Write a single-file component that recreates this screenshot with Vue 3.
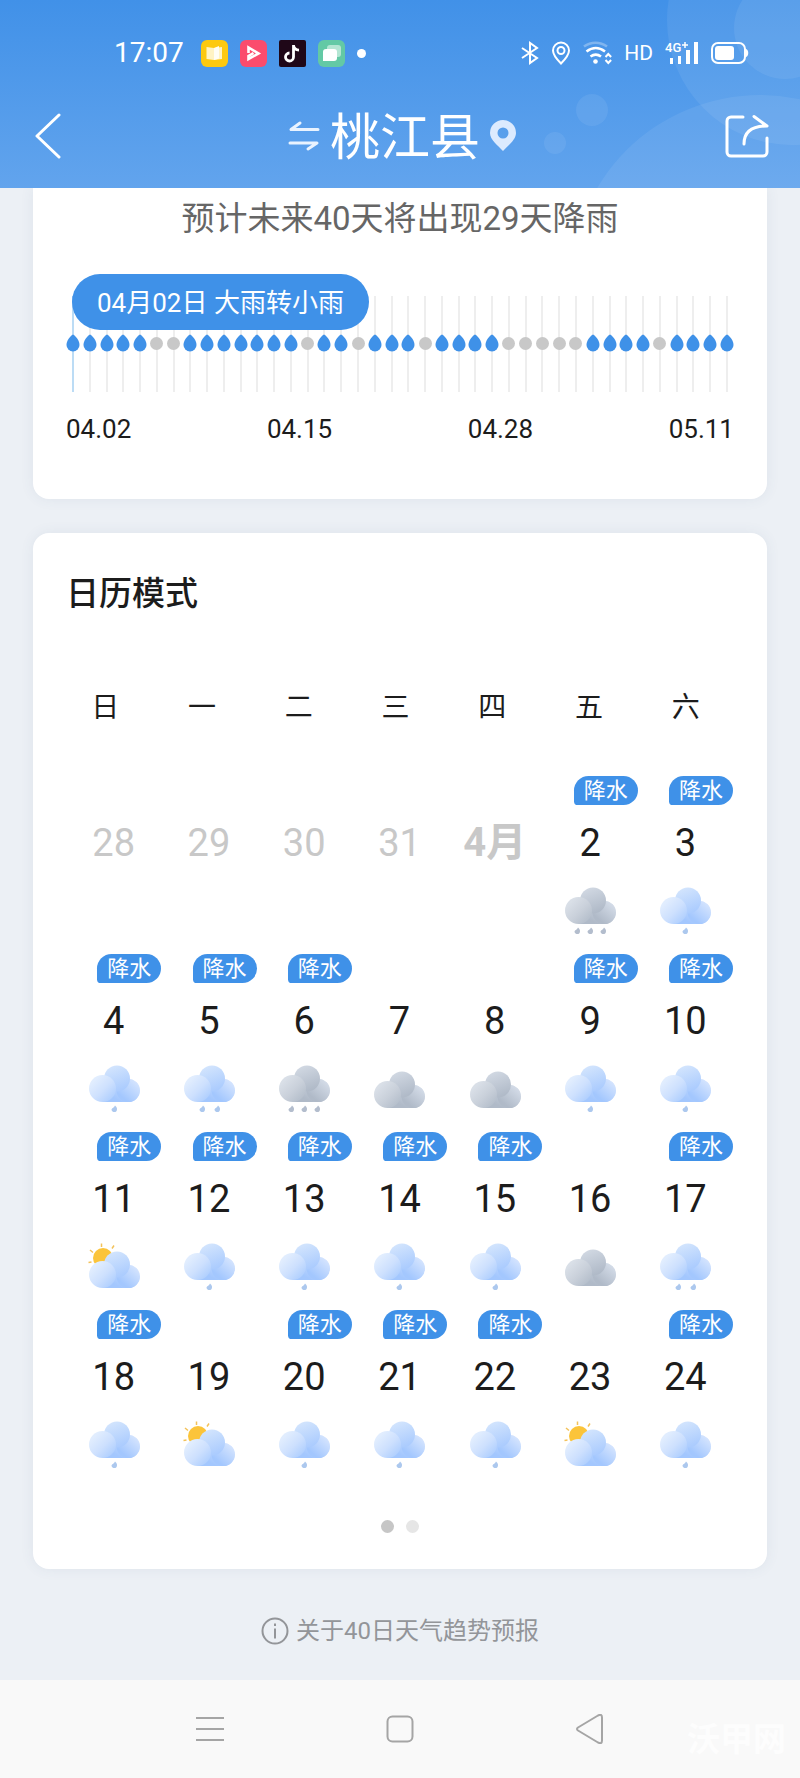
<template>
  <div class="page">
    <header class="header">
      <svg class="header-decor" width="400" height="188" viewBox="0 0 400 188" aria-hidden="true">
        <circle cx="392" cy="20" r="125" />
        <circle cx="385" cy="28" r="51" />
        <circle cx="360" cy="284" r="189" />
        <circle cx="192" cy="110" r="16" />
        <circle cx="155" cy="143" r="11" />
      </svg>

      <div class="status-bar">
        <div class="status-left">
          <span class="clock">17:07</span>
          <svg width="27" height="27" viewBox="0 0 27 27">
            <rect width="27" height="27" rx="6" fill="#fdc910" />
            <path d="M5.500 7l7.500 1 8-1v12l-8 1-7.500-1z" fill="#fff3c4" />
            <path d="M13 8l5-2v12.500l-5 1.500z" fill="#fffdf5" />
          </svg>
          <svg width="27" height="27" viewBox="0 0 27 27">
            <rect width="27" height="27" rx="6" fill="#fb4c6d" />
            <path d="M8.500 13V7.500l10 6-10 5.500v-3l5-3" fill="none" stroke="#fff" stroke-width="2.600" />
          </svg>
          <svg width="27" height="27" viewBox="0 0 27 27">
            <rect width="27" height="27" rx="2" fill="#1f0718" />
            <path d="M14.500 5v12a4 4 0 1 1-4-4M14.500 5.500c.5 3 2.500 4.500 5.500 4.700" fill="none" stroke="#fff" stroke-width="2.800" />
          </svg>
          <svg width="27" height="27" viewBox="0 0 27 27">
            <rect width="27" height="27" rx="6" fill="#63c9a5" />
            <rect x="9" y="5" width="14" height="12" rx="3" fill="#b4e6d3" />
            <path d="M8 9h8a3 3 0 0 1 3 3v6a3 3 0 0 1-3 3H5v-9a3 3 0 0 1 3-3z" fill="#fff" />
          </svg>
          <span class="more-dot"></span>
        </div>

        <div class="status-right">
          <svg width="18" height="24" viewBox="0 0 18 24" fill="none" stroke="#fff" stroke-width="2">
            <path d="M1 7l15 10-7 5V2l7 5L1 17" />
          </svg>
          <svg width="20" height="24" viewBox="0 0 20 24" fill="none" stroke="#fff" stroke-width="2">
            <path d="M10 22.500C6 18.500 2 14 2 9.500a8 8 0 0 1 16 0c0 4.500-4 9-8 13z" />
            <circle cx="10" cy="9.500" r="3.500" />
          </svg>
          <svg width="29" height="24" viewBox="0 0 29 24" fill="none" stroke="#fff" stroke-width="2.600">
            <path d="M1 5.500c7-5 16-5 23 0" opacity=".3" />
            <path d="M3.500 10.500c6-4.500 12.500-4.500 18.500 0M7.500 15.500c3.500-2.500 7-2.500 10.500 0" />
            <circle cx="12.500" cy="20.500" r="2.300" fill="#fff" stroke="none" />
            <path d="M22.500 16l2.800-3 2.800 3M22.500 19l2.800 3 2.800-3" stroke-width="2" />
          </svg>
          <span class="hd">HD</span>
          <svg width="34" height="26" viewBox="0 0 34 26" fill="#fff">
            <text x="0" y="12" class="network">4G</text>
            <path d="M17 5h6M20 2v6" stroke="#fff" stroke-width="1.500" />
            <rect x="5" y="18" width="3" height="6" />
            <rect x="13" y="16" width="3" height="8" />
            <rect x="21" y="10" width="4" height="14" />
            <rect x="29" y="2" width="4" height="22" />
          </svg>
          <svg width="38" height="22" viewBox="0 0 38 22">
            <rect x="1" y="1" width="33" height="20" rx="6" fill="none" stroke="#fff" stroke-width="2" />
            <rect x="4" y="4" width="19" height="14" rx="3" fill="#fff" />
            <path d="M35 7c3 1 3 7 0 8z" fill="#fff" />
          </svg>
        </div>
      </div>

      <div class="app-bar">
        <button class="icon-button" type="button" aria-label="返回">
          <svg width="26" height="46" viewBox="0 0 26 46" fill="none" stroke="#fff" stroke-width="3" stroke-linecap="round" stroke-linejoin="round">
            <path d="M24 2L2 23l22 21" />
          </svg>
        </button>
        <button class="city" type="button">
          <svg width="32" height="36" viewBox="0 0 32 36" fill="none" stroke="#e9f3ff" stroke-width="3" stroke-linecap="round" stroke-linejoin="round">
            <path d="M12 3L3 9.500h27M2 23h27l-9 6" />
          </svg>
          <span>桃江县</span>
          <svg width="26" height="36" viewBox="0 0 26 36">
            <path d="M13 31C8 25.500 0 20 0 13a13 13 0 0 1 26 0c0 7-8 12.500-13 18zM13 7.500a5.500 5.500 0 1 0 0 11 5.500 5.500 0 0 0 0-11z" fill="#dceafe" fill-rule="evenodd" />
          </svg>
        </button>
        <button class="icon-button" type="button" aria-label="分享">
          <svg width="44" height="44" viewBox="0 0 44 44" fill="none" stroke="#fff" stroke-width="3" stroke-linecap="round" stroke-linejoin="round">
            <path d="M18 3H6a4 4 0 0 0-4 4v31a4 4 0 0 0 4 4h32a4 4 0 0 0 4-4V24" />
            <path d="M19 30c0-11 6-18 23-18M29 2.500L42 12" />
          </svg>
        </button>
      </div>
    </header>

    <main class="content">
      <section class="card trend">
        <p class="summary">预计未来40天将出现29天降雨</p>
        <div class="chart">
          <div
            v-for="(rain, i) in trend"
            :key="i"
            class="tick"
            :class="{ active: i === 0 }"
          >
            <svg v-if="rain" width="14" height="18" viewBox="0 0 14 18">
              <path d="M7 0.500C10.500 2.500 13.500 7 13.500 11a6.500 6.500 0 0 1-13 0C0.500 7 3.500 2.500 7 0.500z" fill="#3f91e8" />
            </svg>
            <span v-else class="dry"></span>
          </div>
          <div class="tooltip">04月02日 大雨转小雨</div>
        </div>
        <div class="axis">
          <span v-for="label in axisLabels" :key="label">{{ label }}</span>
        </div>
      </section>

      <section class="card calendar">
        <h2>日历模式</h2>
        <table>
          <thead>
            <tr>
              <th v-for="name in weekdays" :key="name" scope="col">{{ name }}</th>
            </tr>
          </thead>
          <tbody>
            <tr v-for="(week, w) in weeks" :key="w">
              <td v-for="day in week" :key="day.label">
                <div class="badge-slot">
                  <span v-if="day.rain" class="badge">降水</span>
                </div>
                <div class="date" :class="{ muted: !day.icon, month: day.month }">{{ day.label }}</div>
                <svg v-if="day.icon" class="weather" width="56" height="56" viewBox="0 0 56 56">
                  <g v-if="day.icon === 'sun'">
                    <circle cx="17" cy="20" r="10" fill="#fbc43a" />
                    <path d="M2.500 24.500l3-.5M4 12l3 2.500M15.500 5.500v3.500M28 7.500l-2 3" stroke="#f3c25a" stroke-width="1.500" />
                  </g>
                  <!-- right lobe and base, then the top circle, then the left circle -->
                  <g :transform="`translate(0 ${cloudShift[day.icon] || 0})`">
                    <path d="M16.500 42V26h17l9-7a11.500 11.500 0 0 1 0 23z" :fill="`url(#${tone(day.icon)}-base)`" />
                    <circle cx="42" cy="30.500" r="11.500" :fill="`url(#${tone(day.icon)}-base)`" />
                    <circle cx="31" cy="18.500" r="13" :fill="`url(#${tone(day.icon)}-top)`" />
                    <circle cx="16.500" cy="28.500" r="13.500" :fill="`url(#${tone(day.icon)}-left)`" />
                  </g>
                  <path
                    v-for="x in drops[day.icon]"
                    :key="x"
                    :transform="`translate(${x} 45.500)`"
                    d="M1 0C3.500 2 3.500 4.500 2.200 6A3 2.800 0 0 1-2.500 4.500C-2.500 2.500 0 2.500 1 0z"
                    :fill="tone(day.icon) === 'gray' ? '#b3bdcd' : '#acc8ee'"
                  />
                </svg>
              </td>
            </tr>
          </tbody>
        </table>
        <div class="pager">
          <span class="current"></span>
          <span></span>
        </div>
      </section>

      <a class="about" href="#">
        <svg width="28" height="28" viewBox="0 0 28 28" fill="none" stroke="#939599" stroke-width="2">
          <circle cx="14" cy="14" r="12.500" />
          <path d="M14 11.500v10M14 6.500v2.500" />
        </svg>
        关于40日天气趋势预报
      </a>
    </main>

    <nav class="system-nav">
      <button type="button" aria-label="菜单">
        <svg width="28" height="28" viewBox="0 0 28 28" fill="none" stroke="#a5a5a5" stroke-width="2">
          <path d="M0 3h28M0 14h28M0 25h28" />
        </svg>
      </button>
      <button type="button" aria-label="主屏幕">
        <svg width="28" height="28" viewBox="0 0 28 28" fill="none" stroke="#a5a5a5" stroke-width="2">
          <rect x="1.500" y="1.500" width="25" height="25" rx="5" />
        </svg>
      </button>
      <button type="button" aria-label="返回上一页">
        <svg width="28" height="30" viewBox="0 0 28 30" fill="none" stroke="#a5a5a5" stroke-width="2" stroke-linejoin="round">
          <path d="M2 13.500L22 1.500q4-2 4 2v23q0 4-4 2L2 16.500q-2-1.500 0-3z" />
        </svg>
      </button>
      <span class="watermark">沃甲网</span>
    </nav>

    <svg class="gradients" width="0" height="0" aria-hidden="true">
      <defs>
        <linearGradient id="blue-left" x1="0.200" y1="0.200" x2="0.900" y2="0.900">
          <stop offset="0" stop-color="#e1edfe" />
          <stop offset="0.500" stop-color="#cde0fe" />
          <stop offset="1" stop-color="#accdfe" />
        </linearGradient>
        <linearGradient id="blue-top" x1="0.200" y1="0" x2="0.600" y2="1">
          <stop offset="0" stop-color="#d5e6fd" />
          <stop offset="1" stop-color="#aacbfe" />
        </linearGradient>
        <linearGradient id="blue-base" x1="1" y1="0.200" x2="0.400" y2="0.900">
          <stop offset="0" stop-color="#d6e5fe" />
          <stop offset="1" stop-color="#a3c7fe" />
        </linearGradient>
        <linearGradient id="gray-left" x1="0.200" y1="0.200" x2="0.900" y2="0.900">
          <stop offset="0" stop-color="#d9dfe7" />
          <stop offset="0.500" stop-color="#c9d0da" />
          <stop offset="1" stop-color="#b3bdca" />
        </linearGradient>
        <linearGradient id="gray-top" x1="0.200" y1="0" x2="0.600" y2="1">
          <stop offset="0" stop-color="#d3dae4" />
          <stop offset="1" stop-color="#afb9c7" />
        </linearGradient>
        <linearGradient id="gray-base" x1="1" y1="0.200" x2="0.400" y2="0.900">
          <stop offset="0" stop-color="#d5dde9" />
          <stop offset="1" stop-color="#b0bac8" />
        </linearGradient>
      </defs>
    </svg>
  </div>
</template>

<script setup>
// 1 = rain, 0 = dry, one entry per day from 04.02
const trend = [...'1111100111111101101110111100000111101111'].map(Number)
const axisLabels = ['04.02', '04.15', '04.28', '05.11']
const weekdays = ['日', '一', '二', '三', '四', '五', '六']

const drops = {
  light: [28],
  moderate: [21, 36],
  heavy: [15, 28, 41],
}

const cloudShift = {
  cloudy: 6,
  sun: 8,
}

function tone(icon) {
  return icon === 'heavy' || icon === 'cloudy' ? 'gray' : 'blue'
}

function day(label, icon, rain = true) {
  return { label, icon, rain }
}

const weeks = [
  [
    day('28', null, false),
    day('29', null, false),
    day('30', null, false),
    day('31', null, false),
    { label: '4月', icon: null, rain: false, month: true },
    day('2', 'heavy'),
    day('3', 'light'),
  ],
  [
    day('4', 'light'),
    day('5', 'moderate'),
    day('6', 'heavy'),
    day('7', 'cloudy', false),
    day('8', 'cloudy', false),
    day('9', 'light'),
    day('10', 'light'),
  ],
  [
    day('11', 'sun'),
    day('12', 'light'),
    day('13', 'light'),
    day('14', 'light'),
    day('15', 'light'),
    day('16', 'cloudy', false),
    day('17', 'moderate'),
  ],
  [
    day('18', 'light'),
    day('19', 'sun', false),
    day('20', 'light'),
    day('21', 'light'),
    day('22', 'light'),
    day('23', 'sun', false),
    day('24', 'light'),
  ],
]
</script>

<style>
body {
  margin: 0;
  background: #ecf0f5;
}
</style>

<style scoped>
.page {
  min-height: 100vh;
  display: flex;
  flex-direction: column;
  background: #ecf0f5;
  color: #1c1c1c;
  font-family: Roboto, "Noto Sans CJK SC", sans-serif;
}

svg {
  display: block;
  flex: none;
}

button {
  border: 0;
  padding: 0;
  background: none;
  color: inherit;
  font: inherit;
  cursor: pointer;
}

.header {
  position: relative;
  overflow: hidden;
  background: linear-gradient(#4191e8, #62a4ed);
  color: #ffffff;
}

.header-decor {
  position: absolute;
  top: 0;
  right: 0;
  fill: rgba(255, 255, 255, 0.07);
}

.status-bar {
  position: relative;
  display: flex;
  justify-content: space-between;
  align-items: center;
  height: 106px;
  padding: 0 51px 0 114px;
}

.status-left,
.status-right {
  display: flex;
  align-items: center;
  gap: 12px;
}

.clock {
  margin-right: 5px;
  font-size: 28px;
  line-height: 32px;
}

.more-dot {
  width: 9px;
  height: 9px;
  border-radius: 50%;
  background: #ffffff;
}

.hd {
  font-size: 21px;
  line-height: 32px;
}

.network {
  font-size: 13px;
  font-weight: 500;
}

.app-bar {
  position: relative;
  display: flex;
  justify-content: space-between;
  align-items: center;
  height: 64px;
  padding: 0 30px 18px 34px;
}

.icon-button {
  display: flex;
  width: 46px;
  padding: 0 1px 4px;
}

.city {
  display: flex;
  align-items: center;
  gap: 10px;
  font-size: 50px;
  line-height: 64px;
}

.content {
  flex: 1;
  padding: 0 33px;
}

.card {
  border-radius: 16px;
  background: #ffffff;
  box-shadow: 0 0 14px rgba(70, 90, 130, 0.08);
}

.trend {
  padding: 7px 33px 55px;
  border-radius: 0 0 16px 16px;
}

.summary {
  margin: 0;
  text-align: center;
  color: #666666;
  font-size: 33px;
  line-height: 48px;
}

.chart {
  position: relative;
  display: flex;
  justify-content: space-between;
  height: 96px;
  margin-top: 53px;
}

.tick {
  display: flex;
  justify-content: center;
  width: 14px;
  padding-top: 38px;
  box-sizing: border-box;
  background: linear-gradient(#eeeeee, #eeeeee) center / 2px 100% no-repeat;
}

.tick.active {
  background-image: linear-gradient(#bcdcf5, #bcdcf5);
}

.dry {
  width: 13px;
  height: 13px;
  margin-top: 3px;
  border-radius: 50%;
  background: #c8c8c8;
}

.tooltip {
  position: absolute;
  top: -22px;
  left: 6px;
  padding: 2px 25px 0;
  border-radius: 28px;
  background: #3f91e8;
  color: #ffffff;
  font-size: 26px;
  line-height: 54px;
  white-space: nowrap;
}

.axis {
  display: flex;
  justify-content: space-between;
  margin-top: 22px;
  font-size: 26px;
  line-height: 30px;
}

.calendar {
  margin-top: 34px;
  padding: 41px 33px 36px;
}

h2 {
  margin: 0;
  font-size: 33px;
  font-weight: 500;
  line-height: 40px;
}

table,
tbody,
thead {
  display: block;
}

tbody {
  margin-right: 1px;
}

tr {
  display: grid;
  grid-template-columns: repeat(7, 1fr);
}

thead tr {
  margin: 74px 0 48px -9px;
}

th {
  padding: 0;
  font-size: 28px;
  font-weight: 400;
  line-height: 40px;
}

td {
  display: flex;
  flex-direction: column;
  align-items: center;
  height: 178px;
  padding: 0;
}

.badge-slot {
  align-self: flex-end;
  height: 29px;
}

.badge {
  display: block;
  padding: 1px 10px 0;
  border-radius: 15px 15px 15px 4px;
  background: #3f91e8;
  color: #ffffff;
  font-size: 22px;
  line-height: 28px;
}

.date {
  margin: 18px 0 19px;
  font-size: 38px;
  line-height: 40px;
  white-space: nowrap;
}

.muted {
  color: #c8c8c8;
}

.month {
  font-size: 40px;
  font-weight: 700;
}

.pager {
  display: flex;
  justify-content: center;
  gap: 12px;
  margin-top: 32px;
}

.pager span {
  width: 13px;
  height: 13px;
  border-radius: 50%;
  background: #e6e6e6;
}

.pager .current {
  background: #c6c6c6;
}

.about {
  display: flex;
  justify-content: center;
  align-items: center;
  gap: 7px;
  padding: 44px 0 31px;
  color: #939599;
  font-size: 24px;
  line-height: 36px;
  text-decoration: none;
}

.system-nav {
  position: relative;
  display: flex;
  justify-content: center;
  gap: 110px;
  height: 98px;
  background: #f9f9f9;
}

.system-nav button {
  display: flex;
  justify-content: center;
  align-items: center;
  width: 80px;
}

.watermark {
  position: absolute;
  right: 14px;
  bottom: 18px;
  color: #fdfdfd;
  font-size: 33px;
  font-weight: 700;
  line-height: 40px;
}

.gradients {
  position: absolute;
}
</style>
